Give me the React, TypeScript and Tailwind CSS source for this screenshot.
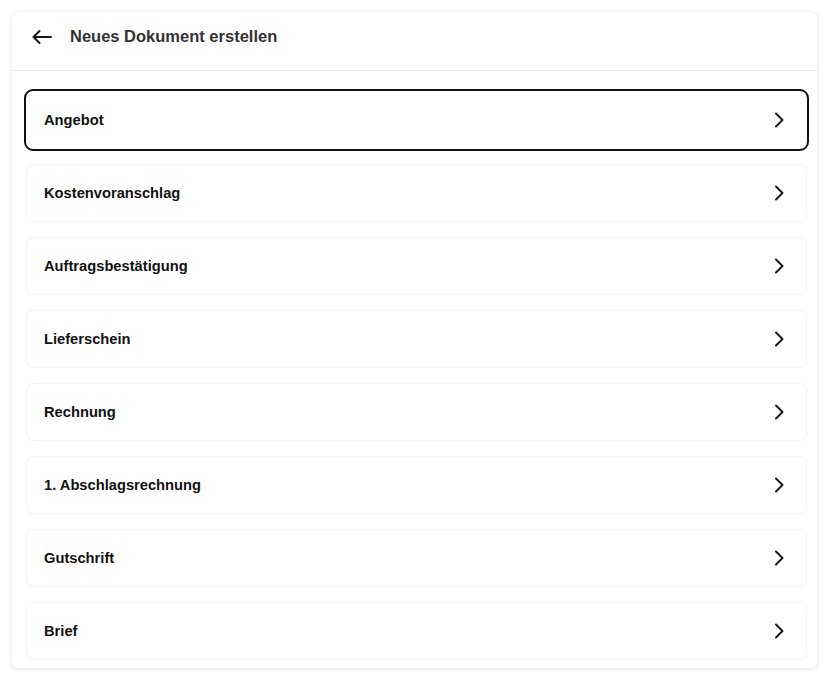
import React from "react";

const items = [
  "Angebot",
  "Kostenvoranschlag",
  "Auftragsbestätigung",
  "Lieferschein",
  "Rechnung",
  "1. Abschlagsrechnung",
  "Gutschrift",
  "Brief",
];

function Chevron() {
  return (
    <svg width="10" height="16" viewBox="0 0 10 16" fill="none">
      <path d="M2 1.5 8.5 8 2 14.5" stroke="#1a1a1a" strokeWidth="2" strokeLinecap="round" strokeLinejoin="round" />
    </svg>
  );
}

function ArrowLeft() {
  return (
    <svg width="20" height="14" viewBox="0 0 20 14" fill="none">
      <path d="M19 7H1.5M7.5 1 1.5 7l6 6" stroke="#1a1a1a" strokeWidth="2" strokeLinecap="round" strokeLinejoin="round" />
    </svg>
  );
}

export default function App() {
  return (
    <div className="w-[829px] h-[683px] bg-white pt-[12px] pl-[12px]" style={{ fontFamily: '"Liberation Sans", Arial, sans-serif' }}>
      <div className="w-[805px] h-[656px] bg-white rounded-[6px] shadow-[0_1px_4px_rgba(0,0,0,0.14)] flex flex-col">
        <div className="h-[59px] border-b border-[#ededed] flex items-center pl-[20px] pb-[9px]">
          <ArrowLeft />
          <span className="ml-[18px] text-[16.5px] font-bold text-[#333]">Neues Dokument erstellen</span>
        </div>
        <div className="flex flex-col gap-[15px] pt-[20px] pl-[14px] pr-[10px]">
          {items.map((label, i) => (
            <div
              key={label}
              className={
                i === 0
                  ? "h-[58px] rounded-[7px] border border-transparent outline-2 outline-[#111] flex items-center justify-between pl-[17px] pr-[22px]"
                  : "h-[58px] rounded-[7px] border border-[#f2f2f2] flex items-center justify-between pl-[17px] pr-[22px]"
              }
            >
              <span className="text-[14.7px] font-bold text-[#111]">{label}</span>
              <Chevron />
            </div>
          ))}
        </div>
      </div>
    </div>
  );
}
